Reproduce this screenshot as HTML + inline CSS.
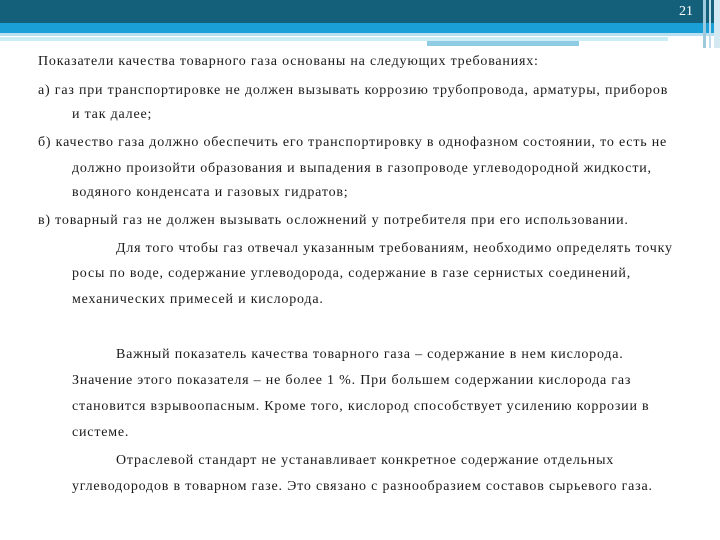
<!DOCTYPE html>
<html><head><meta charset="utf-8"><style>
body{margin:0;width:720px;height:540px;background:#fff;position:relative;overflow:hidden;font-family:"Liberation Serif",serif;color:#1a1a1a;}
.a{position:absolute}
.t{position:absolute;font-size:14px;letter-spacing:0.8px;white-space:nowrap;line-height:16px}
</style></head><body>
<div class="a" style="left:0;top:0;width:720px;height:23px;background:#145f7a"></div>
<div class="a" style="left:0;top:23px;width:720px;height:10px;background:#1aa0d6"></div>
<div class="a" style="left:0;top:33px;width:720px;height:3px;background:#b7dff0"></div>
<div class="a" style="left:0;top:37px;width:668px;height:4px;background:#c9ecf5"></div>
<div class="a" style="left:427px;top:41px;width:152px;height:5px;background:#8fcbe3"></div>
<div class="a" style="left:703px;top:0;width:3px;height:48px;background:#9fc9dc"></div>
<div class="a" style="left:709px;top:0;width:2px;height:48px;background:#bfdcea"></div>
<div class="a" style="left:714px;top:0;width:6px;height:48px;background:#d4e9f2"></div>
<div class="t" style="left:679px;top:4px;color:#fff;font-size:14px;letter-spacing:0">21</div>
<div class="t" style="left:38px;top:54px">Показатели качества товарного газа основаны на следующих требованиях:</div>
<div class="t" style="left:38px;top:83px">а) газ при транспортировке не должен вызывать коррозию трубопровода, арматуры, приборов</div>
<div class="t" style="left:72px;top:107px">и так далее;</div>
<div class="t" style="left:38px;top:135px">б) качество газа должно обеспечить его транспортировку в однофазном состоянии, то есть не</div>
<div class="t" style="left:72px;top:161px">должно произойти образования и выпадения в газопроводе углеводородной жидкости,</div>
<div class="t" style="left:72px;top:185px">водяного конденсата и газовых гидратов;</div>
<div class="t" style="left:38px;top:213px">в) товарный газ не должен вызывать осложнений у потребителя при его использовании.</div>
<div class="t" style="left:116px;top:241px">Для того чтобы газ отвечал указанным требованиям, необходимо определять точку</div>
<div class="t" style="left:72px;top:266px">росы по воде, содержание углеводорода, содержание в газе сернистых соединений,</div>
<div class="t" style="left:72px;top:292px">механических примесей и кислорода.</div>
<div class="t" style="left:116px;top:347px">Важный показатель качества товарного газа – содержание в нем кислорода.</div>
<div class="t" style="left:72px;top:373px">Значение этого показателя – не более 1 %. При большем содержании кислорода газ</div>
<div class="t" style="left:72px;top:399px">становится взрывоопасным. Кроме того, кислород способствует усилению коррозии в</div>
<div class="t" style="left:72px;top:425px">системе.</div>
<div class="t" style="left:116px;top:453px">Отраслевой стандарт не устанавливает конкретное содержание отдельных</div>
<div class="t" style="left:72px;top:479px">углеводородов в товарном газе. Это связано с разнообразием составов сырьевого газа.</div>
</body></html>
